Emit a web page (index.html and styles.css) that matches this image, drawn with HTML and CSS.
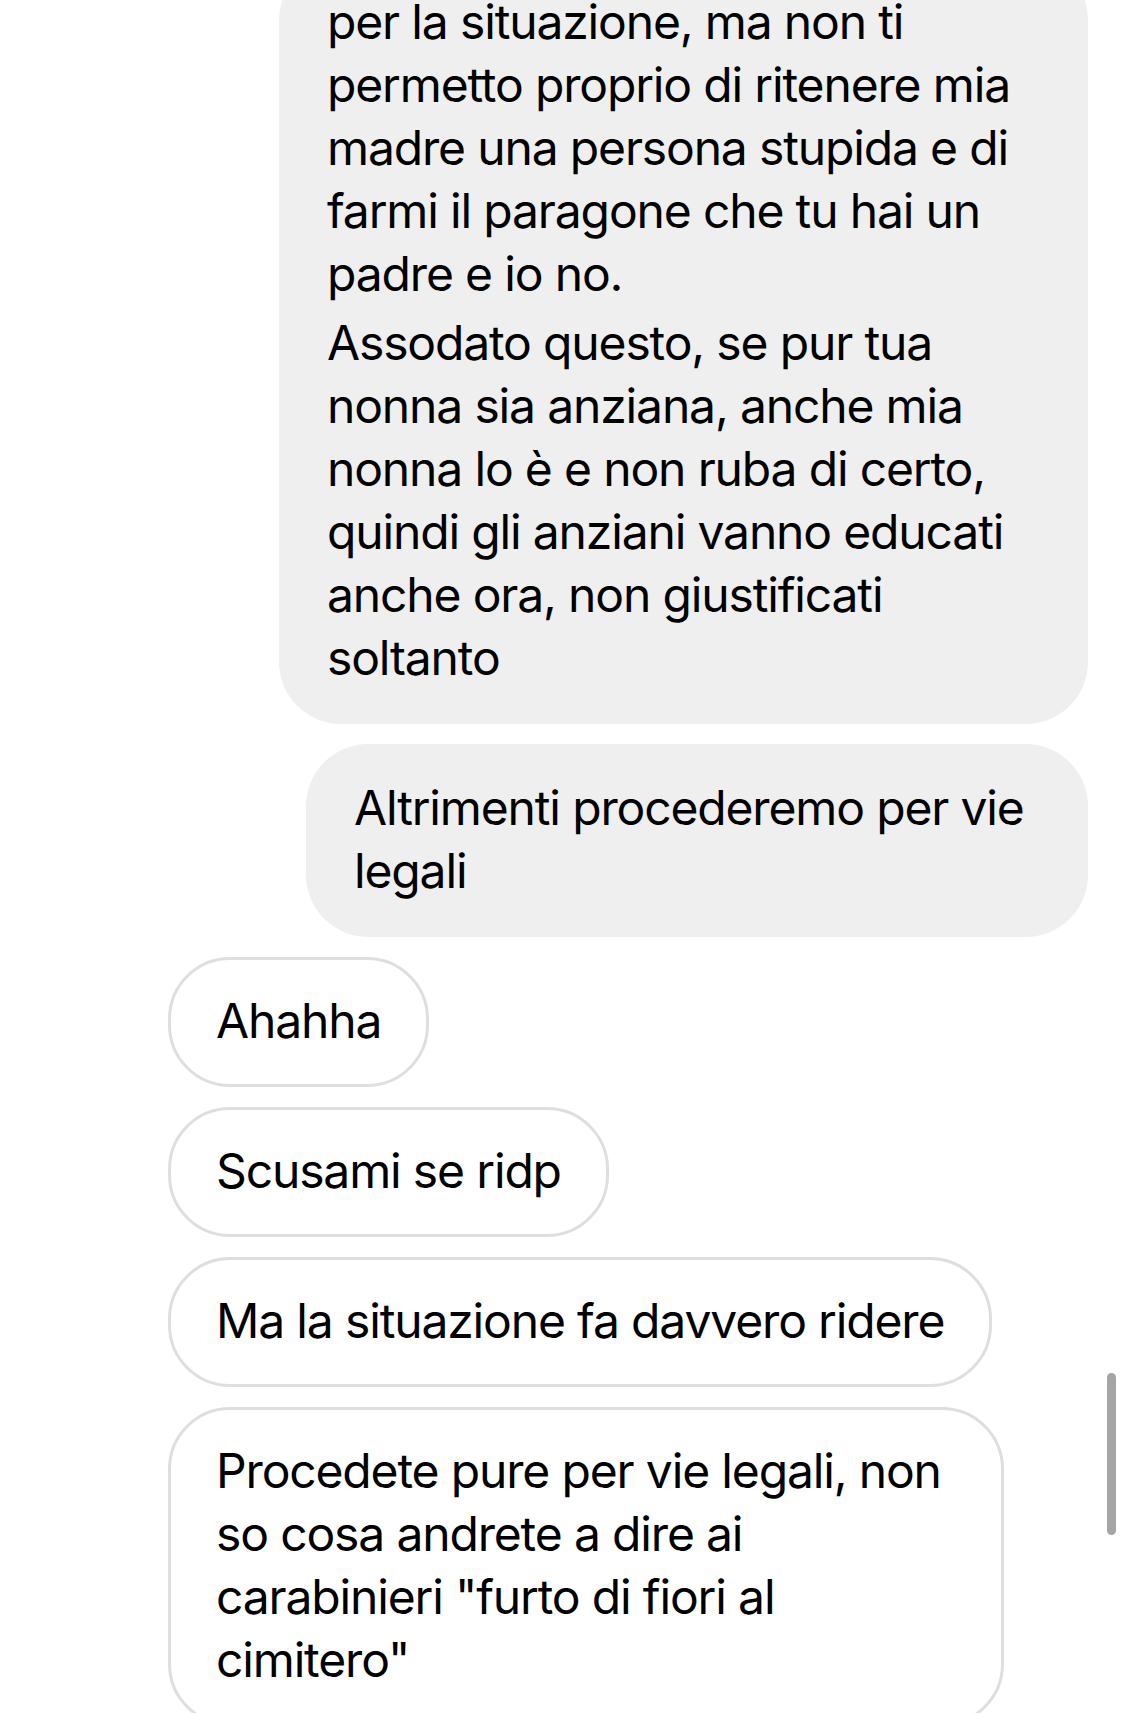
FILE: index.html
```html
<!DOCTYPE html>
<html lang="it">
<head>
<meta charset="utf-8">
<title>Messaggi</title>
<link rel="stylesheet" href="styles.css">
</head>
<body>
<main class="thread">
  <div class="row row-out">
    <div class="bubble bubble-filled bubble-max">
      <p>per la situazione, ma non ti permetto proprio di ritenere mia madre una persona stupida e di farmi il paragone che tu hai un padre e io no.</p>
      <p>Assodato questo, se pur tua nonna sia anziana, anche mia nonna lo è e non ruba di certo, quindi gli anziani vanno educati anche ora, non giustificati soltanto</p>
    </div>
  </div>
  <div class="row row-out">
    <div class="bubble bubble-filled bubble-w-altrimenti">
      <p>Altrimenti procederemo per vie legali</p>
    </div>
  </div>
  <div class="row row-in">
    <div class="bubble bubble-outline"><p>Ahahha</p></div>
  </div>
  <div class="row row-in">
    <div class="bubble bubble-outline"><p>Scusami se ridp</p></div>
  </div>
  <div class="row row-in">
    <div class="bubble bubble-outline"><p>Ma la situazione fa davvero ridere</p></div>
  </div>
  <div class="row row-in">
    <div class="bubble bubble-outline bubble-w-procedete"><p>Procedete pure per vie legali, non so cosa andrete a dire ai carabinieri "furto di fiori al cimitero"</p></div>
  </div>
</main>
<div class="scrollbar" aria-hidden="true"></div>
</body>
</html>
```

FILE: styles.css
```css
html, body {
  margin: 0;
  padding: 0;
  background: #ffffff;
}

body {
  width: 1125px;
  height: 1713px;
  overflow: hidden;
  position: relative;
  font-family: Inter, "Noto Sans", "Liberation Sans", sans-serif;
  font-size: 48px;
  line-height: 63px;
  letter-spacing: -1.15px;
  color: #000000;
}

.thread {
  display: flex;
  flex-direction: column;
  gap: 20px;
  margin-top: -42px;
  padding: 0 37px 0 168px;
}

.row {
  display: flex;
}

.row-out {
  justify-content: flex-end;
}

.row-in {
  justify-content: flex-start;
}

.bubble {
  box-sizing: border-box;
  border-radius: 62px;
  display: flex;
  flex-direction: column;
  gap: 6px;
}

.bubble p {
  margin: 0;
}

.bubble-filled {
  background: #efefef;
  padding: 32px 48px 35px 48px;
}

.bubble-outline {
  background: #ffffff;
  border: 3px solid #dedede;
  padding: 29px 45px 32px 45px;
}

.bubble-max {
  width: 809px;
}

.bubble-w-altrimenti {
  width: 782px;
}

.bubble-w-procedete {
  width: 836px;
}

.scrollbar {
  position: absolute;
  left: 1107px;
  top: 1373px;
  width: 9px;
  height: 162px;
  border-radius: 5px;
  background: #a5a5a5;
}
```
